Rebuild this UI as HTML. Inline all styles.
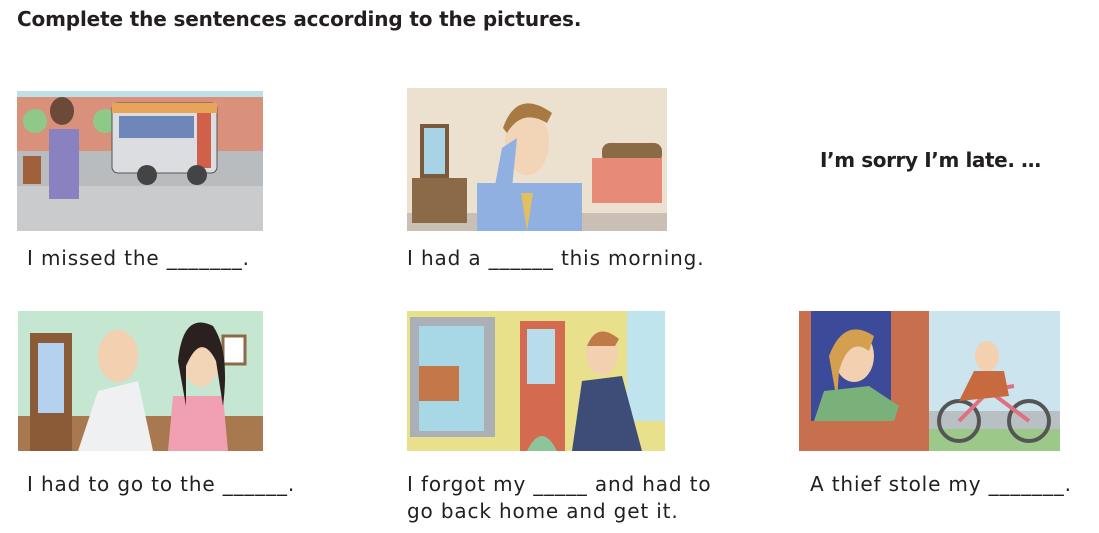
<!DOCTYPE html>
<html><head><meta charset="utf-8"><style>
body{margin:0;width:1099px;height:533px;background:#fff;position:relative;overflow:hidden;font-family:"DejaVu Sans","Liberation Sans",sans-serif;color:#231f20}
.t{position:absolute;font-size:20px;white-space:nowrap;line-height:27px;letter-spacing:0.85px}
svg{position:absolute}
</style></head><body>
<div class="t" style="left:17px;top:6px;font-weight:bold;letter-spacing:-0.15px">Complete the sentences according to the pictures.</div>
<div class="t" style="left:820px;top:147px;font-weight:bold;letter-spacing:-0.4px">I’m sorry I’m late. …</div>
<div class="t" style="left:27px;top:245px">I missed the _______.</div>
<div class="t" style="left:407px;top:245px">I had a ______ this morning.</div>
<div class="t" style="left:27px;top:471px">I had to go to the ______.</div>
<div class="t" style="left:407px;top:471px">I forgot my _____ and had to<br>go back home and get it.</div>
<div class="t" style="left:810px;top:471px">A thief stole my _______.</div>

<svg style="left:17px;top:91px" width="246" height="140" viewBox="0 0 246 140">
<rect width="246" height="140" fill="#b9bcbf"/><rect width="246" height="60" fill="#d9917c"/><rect x="0" y="0" width="246" height="6" fill="#bfe0e6"/>
<rect y="95" width="246" height="45" fill="#c9cbcd"/>
<circle cx="18" cy="30" r="12" fill="#8fc98a"/><circle cx="88" cy="30" r="12" fill="#8fc98a"/>
<rect x="95" y="12" width="105" height="70" rx="6" fill="#dcdde0" stroke="#555"/><rect x="95" y="12" width="105" height="10" fill="#e8a55a"/>
<rect x="102" y="25" width="75" height="22" fill="#6f86b8"/><rect x="180" y="22" width="14" height="55" fill="#d0604a"/>
<circle cx="130" cy="84" r="10" fill="#444"/><circle cx="180" cy="84" r="10" fill="#444"/>
<ellipse cx="45" cy="20" rx="12" ry="14" fill="#6b4a38"/><rect x="32" y="38" width="30" height="70" fill="#8a82c0"/><rect x="6" y="65" width="18" height="28" fill="#a0603a"/>
</svg>

<svg style="left:407px;top:88px" width="260" height="143" viewBox="0 0 260 143">
<rect width="260" height="143" fill="#ece0cf"/><rect y="125" width="260" height="18" fill="#c9bfb4"/>
<rect x="15" y="38" width="25" height="50" fill="#a8d2e6" stroke="#7a5a3a" stroke-width="4"/>
<rect x="5" y="90" width="55" height="45" fill="#8b6a48"/>
<rect x="195" y="55" width="60" height="20" rx="8" fill="#8b6a48"/><rect x="185" y="70" width="70" height="45" fill="#e88a78"/>
<rect x="70" y="95" width="105" height="48" fill="#8fb0e0"/>
<ellipse cx="120" cy="55" rx="22" ry="32" fill="#f2d4b6"/><path d="M96 40 Q110 0 145 25 L140 35 Q115 20 100 45Z" fill="#a67a42"/>
<path d="M80 140 L95 60 L110 50 L105 100Z" fill="#8fb0e0"/><path d="M114 105 L120 143 L126 105Z" fill="#e2c060"/>
</svg>

<svg style="left:18px;top:311px" width="245" height="140" viewBox="0 0 245 140">
<rect width="245" height="140" fill="#c5e6d0"/><rect y="105" width="245" height="35" fill="#a8784e"/>
<rect x="12" y="22" width="42" height="118" fill="#8b5a36"/><rect x="20" y="32" width="26" height="70" fill="#b4d2f0"/>
<rect x="205" y="25" width="22" height="28" fill="#fff" stroke="#8b6a48" stroke-width="3"/>
<path d="M60 140 L80 80 L120 70 L135 140Z" fill="#eef0f2"/><ellipse cx="100" cy="45" rx="20" ry="26" fill="#f2d0b0"/>
<path d="M150 140 L155 85 L205 85 L210 140Z" fill="#f0a0b0"/><ellipse cx="183" cy="50" rx="18" ry="26" fill="#f2d4b6"/>
<path d="M160 50 Q165 0 195 15 Q212 40 205 95 L198 50 Q183 20 168 55 L168 95Z" fill="#2a2020"/>
</svg>

<svg style="left:407px;top:311px" width="258" height="140" viewBox="0 0 258 140">
<rect width="258" height="140" fill="#e8e08a"/><rect x="220" width="38" height="110" fill="#bfe4ee"/>
<rect x="3" y="6" width="85" height="120" fill="#aab0b6"/><rect x="12" y="15" width="65" height="105" fill="#a8d8e6"/><rect x="12" y="55" width="40" height="35" fill="#c4784a"/>
<rect x="113" y="10" width="45" height="130" fill="#d46a50"/><rect x="120" y="18" width="28" height="55" fill="#b8dcea"/>
<path d="M120 140 Q135 110 150 140Z" fill="#8ec49a"/>
<path d="M165 140 L175 70 L215 65 L235 140Z" fill="#3e4c78"/><ellipse cx="195" cy="42" rx="16" ry="22" fill="#f2d0b0"/><path d="M180 35 Q190 10 212 28 L208 35Z" fill="#c07a48"/>
</svg>

<svg style="left:799px;top:311px" width="261" height="140" viewBox="0 0 261 140">
<rect width="261" height="140" fill="#cce4ee"/><rect y="118" width="261" height="22" fill="#9cc88a"/><rect x="130" y="100" width="131" height="18" fill="#b8c0c4"/>
<rect width="130" height="140" fill="#c8704e"/><rect x="12" width="80" height="110" fill="#3c4a9a"/>
<ellipse cx="55" cy="45" rx="20" ry="26" fill="#f2d0b0"/><path d="M30 45 Q45 5 75 25 L70 40 Q50 25 40 60 L38 90Z" fill="#d4a050"/>
<path d="M15 110 L25 80 L70 75 L100 95 L95 110Z" fill="#7ab07a"/>
<circle cx="160" cy="110" r="20" fill="none" stroke="#555" stroke-width="4"/><circle cx="230" cy="110" r="20" fill="none" stroke="#555" stroke-width="4"/>
<path d="M160 110 L190 80 L230 110 M185 80 L215 75" stroke="#e07080" stroke-width="4" fill="none"/>
<ellipse cx="188" cy="45" rx="12" ry="15" fill="#f2d0b0"/><path d="M160 90 L175 60 L205 60 L210 85Z" fill="#c86a40"/>
</svg>
</body></html>
